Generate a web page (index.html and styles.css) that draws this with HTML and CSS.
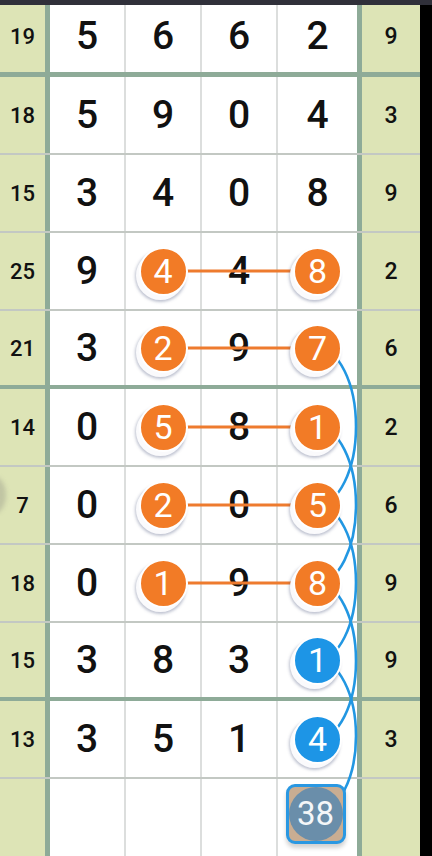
FILE: index.html
```html
<!DOCTYPE html>
<html>
<head>
<meta charset="utf-8">
<link rel="stylesheet" href="styles.css">
</head>
<body>
<div class="page">
  <main class="board">
    <div class="row r-first"><div class="lab">19</div><div class="cell">5</div><div class="cell">6</div><div class="cell">6</div><div class="cell c4">2</div><div class="lab right">9</div></div>
    <div class="row"><div class="lab">18</div><div class="cell">5</div><div class="cell">9</div><div class="cell">0</div><div class="cell c4">4</div><div class="lab right">3</div></div>
    <div class="row"><div class="lab">15</div><div class="cell">3</div><div class="cell">4</div><div class="cell">0</div><div class="cell c4">8</div><div class="lab right">9</div></div>
    <div class="row"><div class="lab">25</div><div class="cell">9</div><div class="cell"><span class="ball orange">4</span></div><div class="cell">4</div><div class="cell c4"><span class="ball orange">8</span></div><div class="lab right">2</div></div>
    <div class="row thick"><div class="lab">21</div><div class="cell">3</div><div class="cell"><span class="ball orange">2</span></div><div class="cell">9</div><div class="cell c4"><span class="ball orange">7</span></div><div class="lab right">6</div></div>
    <div class="row"><div class="lab">14</div><div class="cell">0</div><div class="cell"><span class="ball orange">5</span></div><div class="cell">8</div><div class="cell c4"><span class="ball orange">1</span></div><div class="lab right">2</div></div>
    <div class="row"><div class="lab">7</div><div class="cell">0</div><div class="cell"><span class="ball orange">2</span></div><div class="cell">0</div><div class="cell c4"><span class="ball orange">5</span></div><div class="lab right">6</div></div>
    <div class="row"><div class="lab">18</div><div class="cell">0</div><div class="cell"><span class="ball orange">1</span></div><div class="cell">9</div><div class="cell c4"><span class="ball orange">8</span></div><div class="lab right">9</div></div>
    <div class="row thick"><div class="lab">15</div><div class="cell">3</div><div class="cell">8</div><div class="cell">3</div><div class="cell c4"><span class="ball blue">1</span></div><div class="lab right">9</div></div>
    <div class="row"><div class="lab">13</div><div class="cell">3</div><div class="cell">5</div><div class="cell">1</div><div class="cell c4"><span class="ball blue">4</span></div><div class="lab right">3</div></div>
    <div class="row r-last"><div class="lab"></div><div class="cell"></div><div class="cell"></div><div class="cell"></div><div class="cell c4"><span class="sum"><span class="sum-in">38</span></span></div><div class="lab right"></div></div>

    <svg class="overlay" width="420" height="856" viewBox="0 0 420 856">
      <g stroke="#ee7b2e" stroke-width="3">
        <line x1="186" y1="271" x2="294" y2="271"/>
        <line x1="186" y1="348" x2="294" y2="348"/>
        <line x1="186" y1="427" x2="294" y2="427"/>
        <line x1="186" y1="505" x2="294" y2="505"/>
        <line x1="186" y1="583" x2="294" y2="583"/>
      </g>
      <g stroke="#2297e2" stroke-width="2.6" fill="none">
        <path d="M317 348 A39 78.5 0 0 1 317 505"/>
        <path d="M317 427 A39 78 0 0 1 317 583"/>
        <path d="M317 505 A39 77.5 0 0 1 317 660"/>
        <path d="M317 583 A39 78 0 0 1 317 739"/>
        <path d="M317 660 A39 76 0 0 1 317 812"/>
      </g>
    </svg>
  </main>
  <div class="edge"></div>
  <div class="topbar"></div>
  <div class="float-btn"></div>
</div>
</body>
</html>
```
FILE: styles.css
```css
* { box-sizing: content-box; }
html, body { margin: 0; padding: 0; background: #000; }
body { font-family: Roboto, "Noto Sans", sans-serif; }

.page {
  position: relative;
  width: 432px;
  height: 856px;
  overflow: hidden;
  display: flex;
  background: #000;
}

.board {
  position: relative;
  width: 420px;
  height: 856px;
  background: #fff;
  display: flex;
  flex-direction: column;
}

.edge { width: 12px; background: #000; }

.row {
  display: flex;
  height: 76px;
  border-bottom: 2px solid #c3c8c3;
}
.row.r-first { height: 72px; border-bottom: 5px solid #8eab98; }
.row.thick { height: 74px; border-bottom: 4px solid #8eab98; }
.row.r-last { height: 77px; border-bottom: none; }

.lab {
  width: 45px;
  border-right: 5px solid #8eab98;
  background: #dde4b6;
  display: flex;
  align-items: center;
  justify-content: center;
  font-size: 22px;
  font-weight: 500;
  color: #111;
}
.lab.right {
  width: 58px;
  border-right: none;
  border-left: 5px solid #8eab98;
  font-size: 23px;
}

.cell {
  width: 74px;
  border-right: 2px solid #dcdedd;
  display: flex;
  align-items: center;
  justify-content: center;
  font-size: 39px;
  font-weight: 500;
  color: #111;
}
.cell.c4 { width: 79px; border-right: none; }

.ball {
  position: relative;
  z-index: 2;
  width: 45px;
  height: 45px;
  border-radius: 50%;
  border: 2px solid #fff;
  display: flex;
  align-items: center;
  justify-content: center;
  color: #fff;
  font-size: 34px;
  font-weight: 400;
  box-shadow: -3px 4px 0 0 #fafafc, -3px 5px 3px 1px rgba(70, 80, 120, 0.35);
}
.ball.orange { background: #f27b26; }
.ball.blue { background: #1d95e6; }

.sum {
  position: relative;
  z-index: 2;
  width: 54px;
  height: 54px;
  margin-top: -8px;
  margin-left: -4px;
  border: 3px solid #2a98e2;
  border-radius: 9px;
  background: #c9ad92;
  display: flex;
  align-items: center;
  justify-content: center;
  box-shadow: 0 4px 4px rgba(0, 0, 0, 0.18);
}
.sum-in {
  width: 54px;
  height: 54px;
  border-radius: 50%;
  background: #6a8eaa;
  color: #f4f6f8;
  font-size: 33px;
  font-weight: 400;
  display: flex;
  align-items: center;
  justify-content: center;
}

.overlay {
  position: absolute;
  left: 0;
  top: 0;
  z-index: 1;
  pointer-events: none;
}

.topbar {
  position: absolute;
  left: 0;
  top: 0;
  width: 432px;
  height: 5px;
  background: #30303a;
  z-index: 5;
}

.float-btn {
  position: absolute;
  left: -20px;
  top: 476px;
  width: 26px;
  height: 38px;
  border-radius: 50%;
  background: rgba(140, 140, 130, 0.35);
  filter: blur(2px);
  z-index: 5;
}
```
